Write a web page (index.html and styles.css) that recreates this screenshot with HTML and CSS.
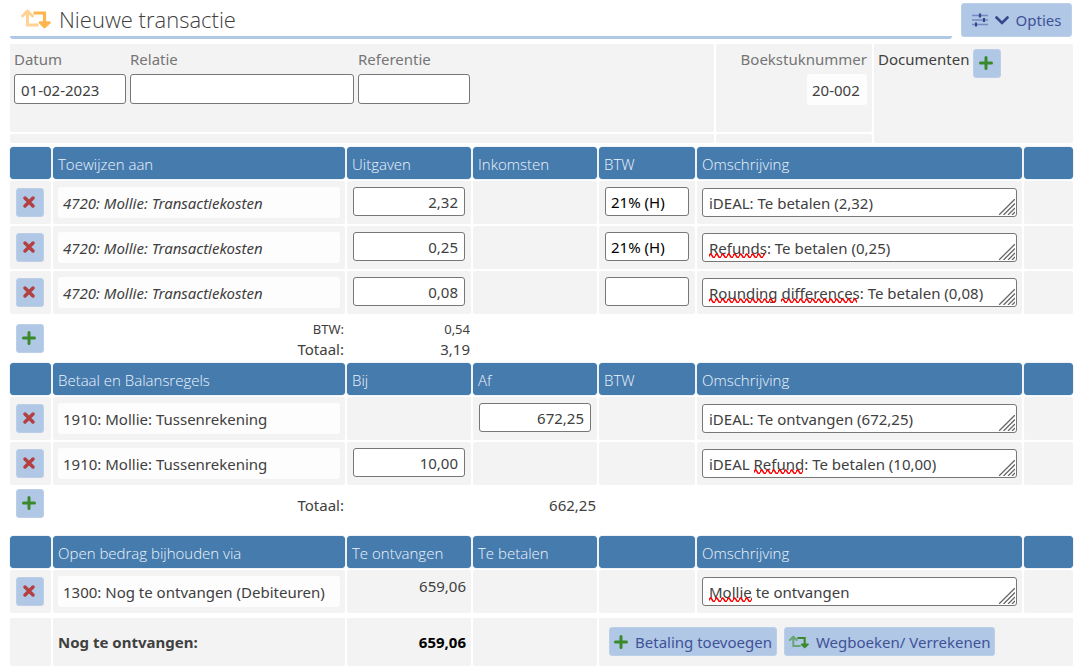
FILE: index.html
```html
<!DOCTYPE html>
<html lang="nl">
<head>
<meta charset="utf-8">
<meta name="viewport" content="width=device-width, initial-scale=1">
<title>Nieuwe transactie</title>
<link rel="stylesheet" href="styles.css">
</head>
<body>
<svg class="symbols" aria-hidden="true">
  <symbol id="i-swap" viewBox="0 0 30 20">
    <path d="M6.5 4.5V16H17.5" opacity=".6" fill="none" stroke="currentColor" stroke-width="3"/>
    <path d="M1.5 7L6.5 2L11.500 7" opacity=".6" fill="none" stroke="currentColor" stroke-width="3" stroke-linecap="round" stroke-linejoin="round"/>
    <path d="M12.500 4H23.500V16" fill="none" stroke="currentColor" stroke-width="3.200"/>
    <path d="M19 13.500L23.500 18L28.500 13.500Z" fill="currentColor" stroke="currentColor" stroke-width="2.500" stroke-linecap="round" stroke-linejoin="round"/>
  </symbol>
  <symbol id="i-x" viewBox="0 0 12 12">
    <path d="M2 2L10 10M10 2L2 10" fill="none" stroke="currentColor" stroke-width="3.400" stroke-linecap="round"/>
  </symbol>
  <symbol id="i-plus" viewBox="0 0 14 14">
    <path d="M7 1.500V12.500M1.500 7H12.500" fill="none" stroke="currentColor" stroke-width="3" stroke-linecap="round"/>
  </symbol>
  <symbol id="i-grip" viewBox="0 0 16 16">
    <path d="M0 16L16 0M4.500 16L16 4.500M9 16L16 9M13 16L16 13" fill="none" stroke="currentColor" stroke-width="1.300"/>
  </symbol>
</svg>

<header class="topbar">
  <h1 class="title"><svg class="title-icon"><use href="#i-swap"/></svg>Nieuwe transactie</h1>
  <button class="btn btn-options" type="button">
    <svg class="icon-sliders" viewBox="0 0 16 14"><path d="M0 2.500H16M0 7H16M0 11.500H16" stroke="#7389c2" stroke-width="1.600"/><path d="M8 .5V4.500M12 5V9M4 9.500V13.500" stroke="#344789" stroke-width="2.200"/></svg>
    <svg class="icon-chevron" viewBox="0 0 14 9"><path d="M1.500 1.500L7 7L12.500 1.500" fill="none" stroke="#344789" stroke-width="2.600" stroke-linecap="round"/></svg>
    Opties
  </button>
</header>

<main>
<section class="info">
  <div class="panel fields">
    <div class="field short"><label for="datum">Datum</label><input id="datum" class="box" value="01-02-2023"></div>
    <div class="field wide"><label for="relatie">Relatie</label><input id="relatie" class="box"></div>
    <div class="field short"><label for="referentie">Referentie</label><input id="referentie" class="box"></div>
  </div>
  <div class="panel number"><label for="nummer">Boekstuknummer</label><input id="nummer" class="plain number-box" value="20-002" readonly></div>
  <div class="panel documents"><span>Documenten</span><button class="btn btn-icon add" type="button" aria-label="Document toevoegen"><svg><use href="#i-plus"/></svg></button></div>
  <div class="panel"></div>
  <div class="panel"></div>
</section>

<table class="lines">
  <colgroup><col class="c-act"><col class="c-account"><col class="c-amount"><col class="c-amount"><col class="c-vat"><col><col class="c-end"></colgroup>
  <thead><tr><th></th><th>Toewijzen aan</th><th>Uitgaven</th><th>Inkomsten</th><th>BTW</th><th>Omschrijving</th><th></th></tr></thead>
  <tbody>
    <tr>
      <td class="act"><button class="btn btn-icon del" type="button" aria-label="Verwijderen"><svg><use href="#i-x"/></svg></button></td>
      <td><input class="plain italic" aria-label="Toewijzen aan" value="4720: Mollie: Transactiekosten"></td>
      <td class="entry"><input class="box amount" aria-label="Uitgaven" value="2,32"></td>
      <td></td>
      <td class="entry"><input class="box vat" aria-label="BTW" value="21% (H)"></td>
      <td><div class="note"><textarea class="box" rows="1" spellcheck="false" aria-label="Omschrijving">iDEAL: Te betalen (2,32)</textarea><svg class="grip"><use href="#i-grip"/></svg></div></td>
      <td></td>
    </tr>
    <tr>
      <td class="act"><button class="btn btn-icon del" type="button" aria-label="Verwijderen"><svg><use href="#i-x"/></svg></button></td>
      <td><input class="plain italic" aria-label="Toewijzen aan" value="4720: Mollie: Transactiekosten"></td>
      <td class="entry"><input class="box amount" aria-label="Uitgaven" value="0,25"></td>
      <td></td>
      <td class="entry"><input class="box vat" aria-label="BTW" value="21% (H)"></td>
      <td><div class="note"><textarea class="box" rows="1" spellcheck="false" aria-label="Omschrijving">Refunds: Te betalen (0,25)</textarea><i class="squiggle w-refunds"></i><svg class="grip"><use href="#i-grip"/></svg></div></td>
      <td></td>
    </tr>
    <tr>
      <td class="act"><button class="btn btn-icon del" type="button" aria-label="Verwijderen"><svg><use href="#i-x"/></svg></button></td>
      <td><input class="plain italic" aria-label="Toewijzen aan" value="4720: Mollie: Transactiekosten"></td>
      <td class="entry"><input class="box amount" aria-label="Uitgaven" value="0,08"></td>
      <td></td>
      <td class="entry"><input class="box vat" aria-label="BTW"></td>
      <td><div class="note"><textarea class="box" rows="1" spellcheck="false" aria-label="Omschrijving">Rounding differences: Te betalen (0,08)</textarea><i class="squiggle w-rounding"></i><i class="squiggle w-differences"></i><svg class="grip"><use href="#i-grip"/></svg></div></td>
      <td></td>
    </tr>
  </tbody>
  <tfoot>
    <tr class="sum">
      <td class="act"><button class="btn btn-icon add" type="button" aria-label="Regel toevoegen"><svg><use href="#i-plus"/></svg></button></td>
      <td><div class="small">BTW:</div><div>Totaal:</div></td>
      <td><div class="small">0,54</div><div>3,19</div></td>
      <td></td><td></td><td></td><td></td>
    </tr>
  </tfoot>
</table>

<table class="lines">
  <colgroup><col class="c-act"><col class="c-account"><col class="c-amount"><col class="c-amount"><col class="c-vat"><col><col class="c-end"></colgroup>
  <thead><tr><th></th><th>Betaal en Balansregels</th><th>Bij</th><th>Af</th><th>BTW</th><th>Omschrijving</th><th></th></tr></thead>
  <tbody>
    <tr>
      <td class="act"><button class="btn btn-icon del" type="button" aria-label="Verwijderen"><svg><use href="#i-x"/></svg></button></td>
      <td><input class="plain" aria-label="Rekening" value="1910: Mollie: Tussenrekening"></td>
      <td></td>
      <td class="entry"><input class="box amount" aria-label="Af" value="672,25"></td>
      <td></td>
      <td><div class="note"><textarea class="box" rows="1" spellcheck="false" aria-label="Omschrijving">iDEAL: Te ontvangen (672,25)</textarea><svg class="grip"><use href="#i-grip"/></svg></div></td>
      <td></td>
    </tr>
    <tr>
      <td class="act"><button class="btn btn-icon del" type="button" aria-label="Verwijderen"><svg><use href="#i-x"/></svg></button></td>
      <td><input class="plain" aria-label="Rekening" value="1910: Mollie: Tussenrekening"></td>
      <td class="entry"><input class="box amount" aria-label="Bij" value="10,00"></td>
      <td></td>
      <td></td>
      <td><div class="note"><textarea class="box" rows="1" spellcheck="false" aria-label="Omschrijving">iDEAL Refund: Te betalen (10,00)</textarea><i class="squiggle w-refund"></i><svg class="grip"><use href="#i-grip"/></svg></div></td>
      <td></td>
    </tr>
  </tbody>
  <tfoot>
    <tr class="sum single">
      <td class="act"><button class="btn btn-icon add" type="button" aria-label="Regel toevoegen"><svg><use href="#i-plus"/></svg></button></td>
      <td>Totaal:</td>
      <td></td>
      <td>662,25</td>
      <td></td><td></td><td></td>
    </tr>
  </tfoot>
</table>

<table class="lines">
  <colgroup><col class="c-act"><col class="c-account"><col class="c-amount"><col class="c-amount"><col class="c-vat"><col><col class="c-end"></colgroup>
  <thead><tr><th></th><th>Open bedrag bijhouden via</th><th>Te ontvangen</th><th>Te betalen</th><th></th><th>Omschrijving</th><th></th></tr></thead>
  <tbody>
    <tr>
      <td class="act"><button class="btn btn-icon del" type="button" aria-label="Verwijderen"><svg><use href="#i-x"/></svg></button></td>
      <td><input class="plain" aria-label="Rekening" value="1300: Nog te ontvangen (Debiteuren)"></td>
      <td class="figure">659,06</td>
      <td></td>
      <td></td>
      <td><div class="note"><textarea class="box" rows="1" spellcheck="false" aria-label="Omschrijving">Mollie te ontvangen</textarea><i class="squiggle w-mollie"></i><svg class="grip"><use href="#i-grip"/></svg></div></td>
      <td></td>
    </tr>
  </tbody>
  <tfoot>
    <tr class="due">
      <td></td>
      <td>Nog te ontvangen:</td>
      <td class="due-amount">659,06</td>
      <td></td>
      <td colspan="3"><div class="actions">
        <button class="btn btn-text" type="button"><svg class="icon-plus"><use href="#i-plus"/></svg>Betaling toevoegen</button>
        <button class="btn btn-text" type="button"><svg class="icon-swap"><use href="#i-swap"/></svg>Wegboeken/ Verrekenen</button>
      </div></td>
    </tr>
  </tfoot>
</table>
</main>
</body>
</html>
```
FILE: styles.css
```css
* { box-sizing: border-box; }

body {
  margin: 0;
  background: #fff;
  color: #404040;
  font: 15px/20px "Noto Sans", "Open Sans", sans-serif;
}

.symbols { position: absolute; width: 0; height: 0; }

input, textarea, button { font: inherit; color: inherit; margin: 0; }

/* Top bar */
.topbar {
  display: flex;
  align-items: flex-start;
  gap: 9px;
  padding: 3px 5px 0 10px;
}

.title {
  flex: 1;
  display: flex;
  align-items: center;
  gap: 8px;
  height: 36px;
  margin: 0;
  padding: 0 0 2px 11px;
  border-bottom: 3px solid #b0c7e6;
  border-radius: 0 0 3px 3px;
  font: 300 22px/32px "Open Sans", "Noto Sans", sans-serif;
}

.title-icon { width: 30px; height: 20px; color: #ffb54d; }

/* Buttons */
.btn {
  display: inline-flex;
  align-items: center;
  justify-content: center;
  border: 1px solid #bccfe9;
  border-radius: 3px;
  background: #b0c7e6;
  color: #3f5296;
  padding: 0;
}

.btn-options { width: 111px; height: 34px; gap: 7px; }
.icon-sliders { width: 16px; height: 14px; }
.icon-chevron { width: 14px; height: 9px; }

.btn-icon { width: 28px; height: 29px; padding: 0 2px 1px 0; }
.btn-icon svg { display: block; width: 14px; height: 14px; }
.btn-icon.add { color: #3a8a2c; }
.btn-icon.del { color: #b34040; }
.btn-icon.del svg { width: 12px; height: 12px; }

.btn-text { height: 29px; padding: 0 4px; gap: 7px; }
.icon-plus { width: 14px; height: 14px; color: #3a8a2c; }
.icon-swap { width: 20px; height: 14px; color: #3a8a2c; }

/* Transaction data */
.info {
  display: grid;
  grid-template-columns: 1fr 156px 199px;
  grid-template-rows: 88px 9px;
  gap: 2px;
  padding: 5px 4px 2px 10px;
}

.panel { background: #f3f3f3; border-radius: 2px; }

.fields { display: flex; gap: 4px; padding: 5px 4px; color: #757575; }
.field { display: flex; flex-direction: column; gap: 5px; }
.field.short { width: 112px; }
.field.wide { width: 224px; }
.fields .box { height: 30px; color: #404040; }

.number {
  display: flex;
  flex-direction: column;
  align-items: flex-end;
  gap: 5px;
  padding: 5px;
  color: #757575;
}
.plain.number-box { width: 60px; color: #404040; }

.documents { grid-row: span 2; display: flex; gap: 4px; padding: 5px 4px; }

/* Text boxes */
.box {
  display: block;
  width: 100%;
  height: 29px;
  padding: 1px 6px 0;
  border: 1px solid #777;
  border-radius: 3px;
  background: #fff;
}

.plain {
  display: block;
  width: 100%;
  height: 31px;
  padding: 0 5px;
  border: 0;
  border-radius: 3px;
  background: #fdfdfd;
}

.italic { font-style: italic; }
.amount { text-align: right; }
.vat { color: #000; padding-left: 5px; }

.note { position: relative; margin-top: 1px; }
.note .box { resize: none; overflow: hidden; white-space: nowrap; padding-top: 4px; }

.grip {
  position: absolute;
  right: 2px;
  bottom: 2px;
  width: 16px;
  height: 16px;
  color: #666;
  pointer-events: none;
}

.squiggle {
  position: absolute;
  left: 7px;
  top: 20px;
  height: 5px;
  background: url("data:image/svg+xml,%3Csvg xmlns='http://www.w3.org/2000/svg' width='6' height='5'%3E%3Cpath d='M0 3.5Q1.500 -1 3 2.500T6 3.500' fill='none' stroke='red' stroke-width='1.600'/%3E%3C/svg%3E") repeat-x;
  pointer-events: none;
}
.w-refunds { width: 56px; }
.w-rounding { width: 67px; }
.w-differences { left: 79px; width: 76px; }
.w-refund { left: 52px; width: 49px; }
.w-mollie { width: 43px; }

/* Line tables */
main { display: block; }

.lines {
  width: calc(100% - 10px);
  margin: 0 2px 0 8px;
  table-layout: fixed;
  border-spacing: 2px;
}

.c-act { width: 41px; }
.c-account { width: 292px; }
.c-amount { width: 124px; }
.c-vat { width: 96px; }
.c-end { width: 49px; }

.lines th {
  height: 32px;
  padding: 1px 5px 0;
  border-radius: 4px;
  background: #467bae;
  box-shadow: 0 0 1px #467bae;
  color: #edf4fb;
  font: 300 15px/20px "Open Sans", "Noto Sans", sans-serif;
  text-align: left;
}

.lines td {
  height: 43px;
  padding: 6px 5px;
  border-radius: 2px;
  background: #f3f3f3;
  vertical-align: top;
}

.lines .entry { padding: 6px; }
.lines .act { padding: 7px 6px; }

.lines .figure { text-align: right; }

.lines .sum td { background: none; padding: 3px 1px 0; text-align: right; }
.lines .sum .act { padding: 8px 6px 0; text-align: left; }
.sum .small { font-size: 13px; }
.lines .single td { height: 45px; padding-top: 8px; }
.lines .single .act { padding-top: 2px; }

.lines .due td {
  height: 51px;
  padding: 0 5px;
  border-top: 3px solid #fff;
  vertical-align: middle;
  font-weight: bold;
}
.lines .due .due-amount { text-align: right; color: #000; }
.actions { display: flex; gap: 7px; padding: 0 5px 1px; font-weight: normal; }
```
